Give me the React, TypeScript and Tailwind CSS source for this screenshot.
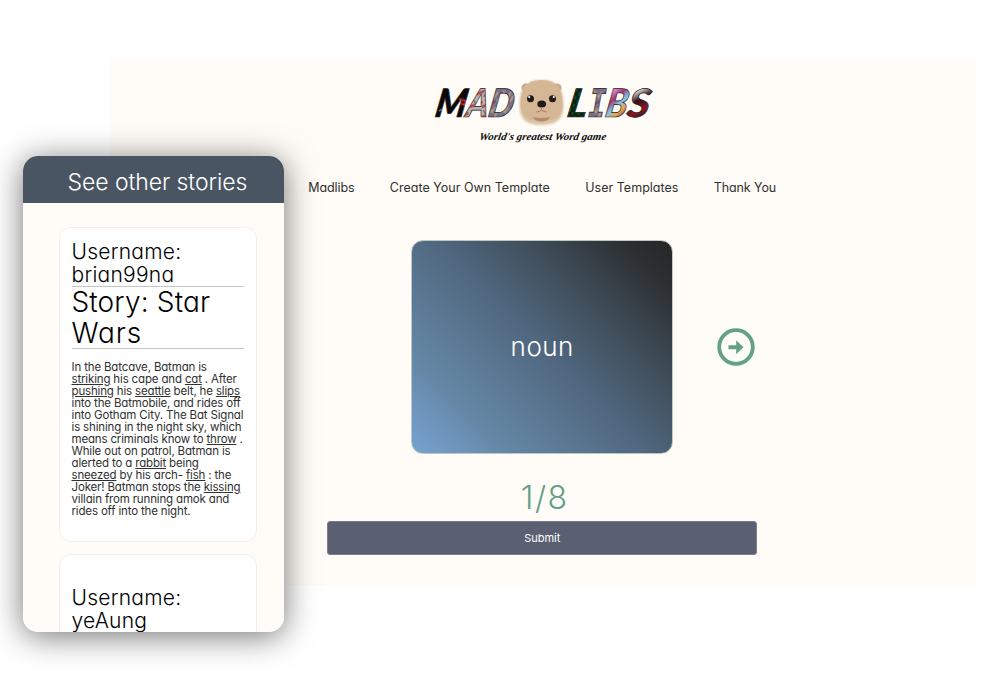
import React from "react";

const navItems = [
  { label: "Madlibs", style: "w-[47px] tracking-[-0.08px]" },
  { label: "Create Your Own Template", style: "w-[161px] tracking-[0.02px]" },
  { label: "User Templates", style: "w-[94px] tracking-[0.02px]" },
  { label: "Thank You", style: "w-[63px] tracking-[-0.1px]" },
];

const story: string[][] = [
  ["In the Batcave, Batman is"],
  ["", "striking", " his cape and ", "cat", " . After"],
  ["", "pushing", " his ", "seattle", " belt, he ", "slips"],
  ["into the Batmobile, and rides off"],
  ["into Gotham City. The Bat Signal"],
  ["is shining in the night sky, which"],
  ["means criminals know to ", "throw", " ."],
  ["While out on patrol, Batman is"],
  ["alerted to a ", "rabbit", " being"],
  ["", "sneezed", " by his arch- ", "fish", " : the"],
  ["Joker! Batman stops the ", "kissing"],
  ["villain from running amok and"],
  ["rides off into the night."],
];

function Logo() {
  return (
    <svg width="226" height="74" viewBox="430 74 226 74" aria-label="Mad Libs">
      <defs>
        <pattern id="ink" width="34" height="30" x="435" y="88" patternUnits="userSpaceOnUse">
          <rect width="34" height="30" fill="#090909" />
          <path d="M10 7l5-2M14 12l4-2M3 23l3-2" stroke="#aaa" />
          <path d="M21 11l7 2v4l-6-2" stroke="#e32128" strokeWidth="2" fill="none" />
        </pattern>
        <pattern id="stripe" width="12" height="11" patternUnits="userSpaceOnUse">
          <rect width="12" height="11" fill="#b9b5b5" />
          <path d="M0 8l12-5" stroke="#b64a4c" strokeWidth="3" />
          <path d="M2 0l3 4" stroke="#555" />
        </pattern>
        <pattern id="comic" width="13" height="15" patternUnits="userSpaceOnUse">
          <rect width="13" height="15" fill="#77728b" />
          <path d="M0 12l5-10 5 5 3-5" stroke="#b79a80" strokeWidth="2" fill="none" />
          <path d="M2 2l3 2M8 14l4-3" stroke="#863b64" strokeWidth="2" />
        </pattern>
        <pattern id="matrix" width="6" height="8" patternUnits="userSpaceOnUse">
          <rect width="6" height="8" fill="#06250f" />
          <path d="M2 0v3M5 4v4" stroke="#1b6c3a" />
        </pattern>
        <linearGradient id="candy" x1="0" y1="0" x2="0.5" y2="1">
          <stop stopColor="#5b3d91" />
          <stop offset=".3" stopColor="#d48ed6" />
          <stop offset=".48" stopColor="#a2356c" />
          <stop offset=".66" stopColor="#87c1e8" />
          <stop offset=".85" stopColor="#efa33c" />
          <stop offset="1" stopColor="#733790" />
        </linearGradient>
        <linearGradient id="crimson" x1="0" y1="0" x2=".3" y2="1">
          <stop stopColor="#7d7777" />
          <stop offset=".35" stopColor="#d2cccc" />
          <stop offset=".55" stopColor="#321016" />
          <stop offset=".8" stopColor="#8d1822" />
          <stop offset="1" stopColor="#241112" />
        </linearGradient>
        <filter id="fade" x="-20%" y="-20%" width="140%" height="140%">
          <feGaussianBlur stdDeviation="1.3" />
        </filter>
      </defs>
      <g transform="translate(20.6 0) skewX(-10)" className="font-['Lato'] text-[39px] font-black italic" stroke="#252020" strokeWidth=".7">
        <text x="434" y="117" textLength="31" lengthAdjust="spacingAndGlyphs" fill="url(#ink)">M</text>
        <text x="465" y="117" textLength="22" lengthAdjust="spacingAndGlyphs" fill="url(#stripe)">A</text>
        <text x="487" y="117" textLength="25" lengthAdjust="spacingAndGlyphs" fill="url(#comic)">D</text>
        <text x="566" y="117" textLength="20" lengthAdjust="spacingAndGlyphs" fill="url(#matrix)">L</text>
        <text x="586" y="117" textLength="18" lengthAdjust="spacingAndGlyphs" fill="url(#comic)" className="font-['DejaVu_Sans_Mono'] font-bold not-italic">I</text>
        <text x="604" y="117" textLength="22" lengthAdjust="spacingAndGlyphs" fill="url(#candy)">B</text>
        <text x="626" y="117" textLength="22" lengthAdjust="spacingAndGlyphs" fill="url(#crimson)">S</text>
      </g>
      <circle cx="526" cy="88" r="4.500" fill="#c3a27f" />
      <circle cx="557" cy="88" r="4.500" fill="#c3a27f" />
      <path d="M519.500 105c0-17 7-25 22-25s22 8 22 25c0 14-6 20-22 20s-22-6-22-20z" fill="#dcc2a6" filter="url(#fade)" />
      <path d="M520.500 104c0-16 7-24 21-24s21 8 21 24c0 11-5 17-21 17s-21-6-21-17z" fill="#d5b695" />
      <circle cx="530.500" cy="98.700" r="3.500" fill="#241a18" />
      <circle cx="552.500" cy="98.700" r="3.500" fill="#241a18" />
      <circle cx="529.200" cy="97" r="1.100" fill="#fff" />
      <circle cx="553.800" cy="97" r="1.100" fill="#fff" />
      <ellipse cx="541.700" cy="104" rx="4.400" ry="3.500" fill="#211c1c" />
      <path d="M541.500 107v3m-5 2q3.500 0 5-2q2 2 5 2" fill="none" stroke="#a57c5d" strokeWidth="1" />
      <path d="M533 117q8.500 2 17 0q-2 4.500-8.500 4.500T533 117z" fill="#b48d68" />
      <g transform="translate(24.500 0) skewX(-10)">
        <text x="479" y="140" textLength="127" lengthAdjust="spacingAndGlyphs" className="font-['Liberation_Serif'] text-[10.500px] font-bold italic" fill="#080808">World's greatest Word game</text>
      </g>
    </svg>
  );
}

function Sidebar() {
  return (
    <aside className="absolute left-[22.5px] top-[155.5px] h-[476px] w-[261.500px] overflow-hidden rounded-[15px] bg-[#fffcf7] text-black">
      <header className="flex h-[47.5px] items-center whitespace-nowrap bg-[#4a5563] pl-[45px] pt-[5px] text-[23px] leading-[28px] tracking-[-0.07px] text-white">
        See other stories
      </header>
      <div className="flex flex-col gap-3 pl-9 pt-6">
        <article className="h-[315px] w-[198px] shrink-0 rounded-[12px] border border-[#f0efed] bg-white px-3 pt-3">
          <h2 className="h-[47px] w-[172px] border-b border-[#c4c4c4] text-[21px] leading-[23px] tracking-[0.25px]">
            Username:<br />brian99na
          </h2>
          <h1 className="h-[62px] w-[172px] border-b border-[#c4c4c4] text-[28px] leading-[31px] tracking-[0.15px]">
            Story: Star<br /><span className="tracking-[0.9px]">Wars</span>
          </h1>
          <p className="pt-3 text-[11.500px] font-normal leading-3 tracking-[-0.16px] text-[#303030]">
            {story.map((line, i) => (
              <span key={i} className="block whitespace-pre">
                {line.map((part, j) => (
                  <span key={j} className={j % 2 ? "underline underline-offset-1" : ""}>{part}</span>
                ))}
              </span>
            ))}
          </p>
        </article>
        <article className="h-[315px] w-[198px] shrink-0 rounded-[12px] border border-[#f0efed] bg-white px-3 pt-[31px]">
          <h2 className="text-[21px] leading-[23px] tracking-[0.25px]">Username:<br />yeAung</h2>
        </article>
      </div>
    </aside>
  );
}

export default function App() {
  return (
    <div className="relative h-[675px] w-[1000px] overflow-hidden bg-white pl-[110px] pt-[58px] font-['Inter','Liberation_Sans',sans-serif] font-light [font-feature-settings:'cv11']">
      <main className="flex h-[527px] w-[865.5px] flex-col items-center bg-[#fffcf7]">
        <div className="h-[90px] pt-4"><Logo /></div>
        <nav className="mt-[31px] flex h-[18px] w-[469px] gap-[34.5px] whitespace-nowrap text-[12.500px] font-normal leading-[18px] text-[#303030]">
          {navItems.map((item) => (
            <a key={item.label} className={`shrink-0 ${item.style}`}>{item.label}</a>
          ))}
        </nav>
        <section className="mr-px mt-[43px] grid h-[214px] w-[430px] grid-cols-[84px_262px_44px_38px] items-center">
          <div />
          <div className="flex h-[214px] items-center justify-center rounded-[12px] border border-[#bdc8c5] bg-[linear-gradient(45deg,#75a3cf_0%,#6f96bf_10%,#6588a7_20%,#50677f_50%,#3e4d58_70%,#2c2e30_90%,#252525_100%)] bg-origin-border text-[26px] leading-8 tracking-[0.5px] text-white">
            noun
          </div>
          <div />
          <svg width="38" height="38" viewBox="0 0 38 38" fill="none">
            <circle cx="19" cy="19" r="16.800" stroke="#62a087" strokeWidth="3.800" />
            <path d="M11.500 17.200h7.700v-5l7.300 7-7.300 7v-5h-7.700z" fill="#62a087" />
          </svg>
        </section>
        <div className="mt-[24px] flex h-[43px] items-start pl-[4px] text-[32px] leading-10 tracking-[1.5px] text-[#62a087]">1/8</div>
        <button className="mr-px h-[34px] w-[430px] rounded-[3px] border border-[#797e91] bg-[#5b5f72] text-[11px] font-normal text-white">Submit</button>
      </main>
      <div className="pointer-events-none absolute left-[23px] top-[156px] h-[476px] w-[261px] rounded-[15px] shadow-[0_4px_32px_rgba(0,0,0,0.55)]" />
      <Sidebar />
    </div>
  );
}
